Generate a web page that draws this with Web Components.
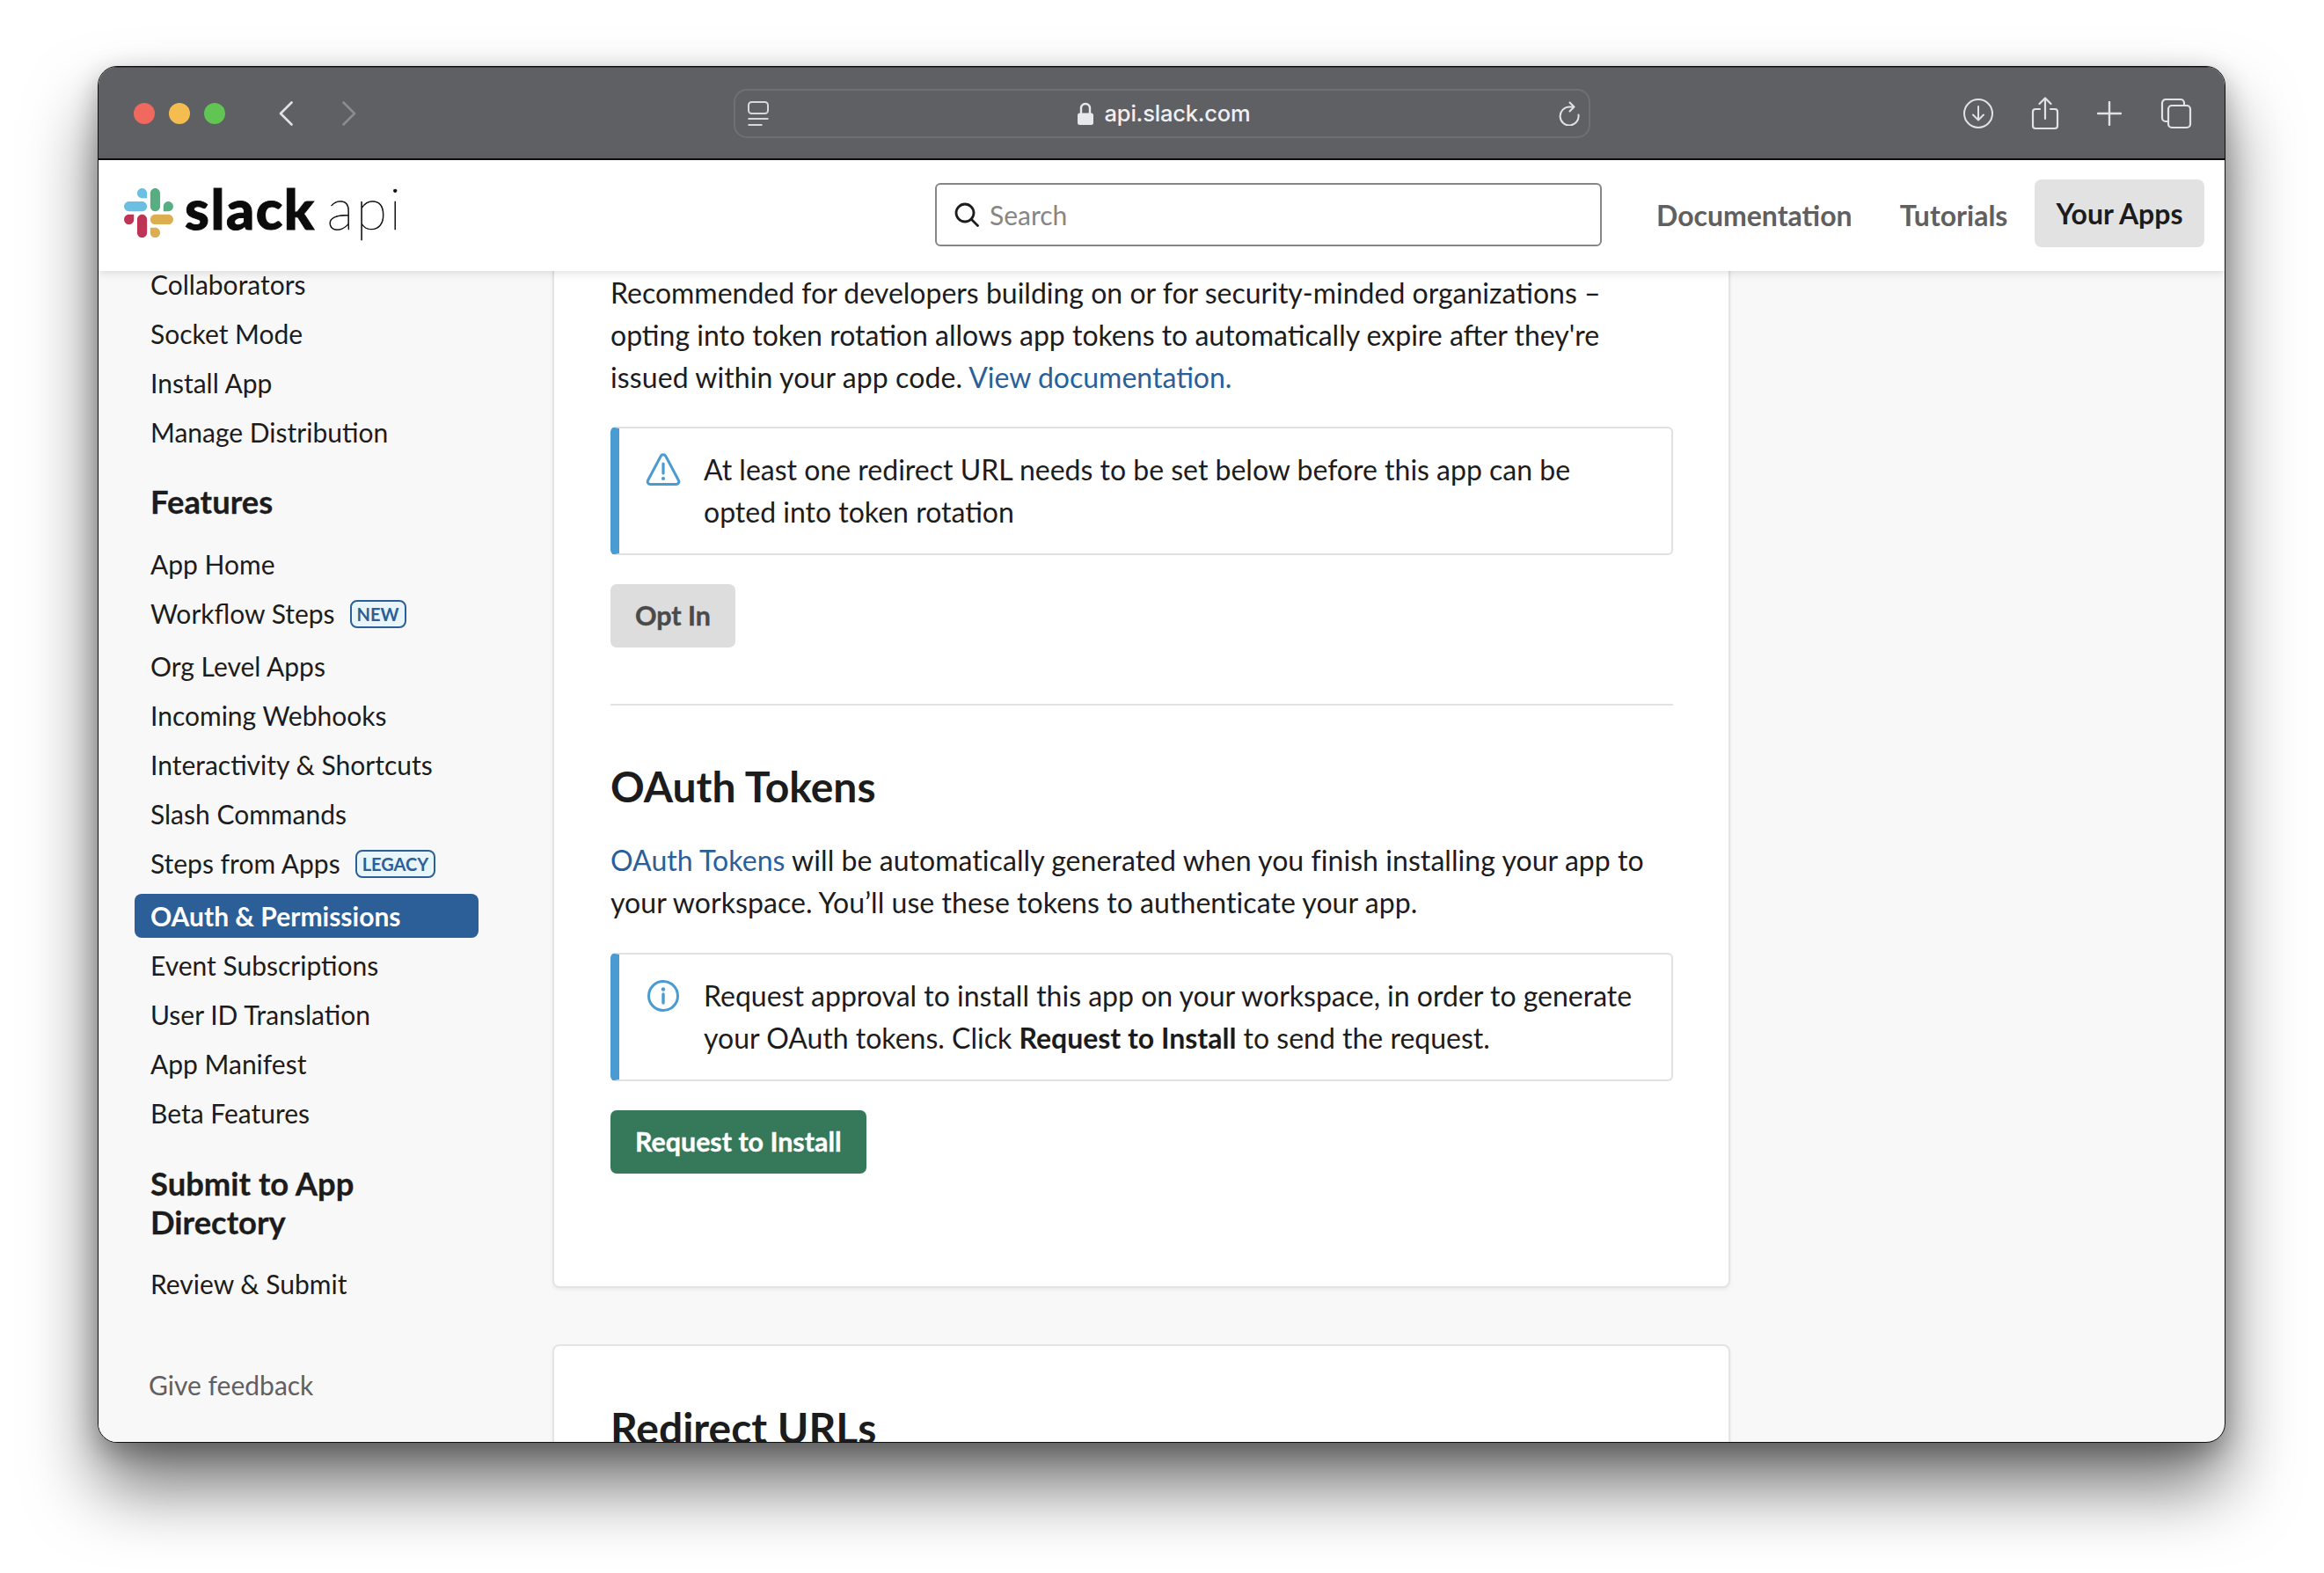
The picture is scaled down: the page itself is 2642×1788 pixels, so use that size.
<!DOCTYPE html>
<html lang="en"><head><meta charset="utf-8"><title>slack api</title>
<style>
html,body{margin:0;padding:0;background:#fff}
body{width:2642px;height:1788px;overflow:hidden;font-family:Lato,"Liberation Sans",sans-serif;color:#1d1c1d}
</style></head>
<body>
<x-window>
  <x-titlebar slot="top"></x-titlebar>
  <x-apiheader slot="top"></x-apiheader>
  <x-sidebar slot="side">
    <x-navitem>Collaborators</x-navitem>
    <x-navitem>Socket Mode</x-navitem>
    <x-navitem>Install App</x-navitem>
    <x-navitem>Manage Distribution</x-navitem>
    <x-navhead>Features</x-navhead>
    <x-navitem>App Home</x-navitem>
    <x-navitem badge>Workflow Steps<x-badge>NEW</x-badge></x-navitem>
    <x-navitem>Org Level Apps</x-navitem>
    <x-navitem>Incoming Webhooks</x-navitem>
    <x-navitem>Interactivity &amp; Shortcuts</x-navitem>
    <x-navitem>Slash Commands</x-navitem>
    <x-navitem badge>Steps from Apps<x-badge>LEGACY</x-badge></x-navitem>
    <x-navitem active>OAuth &amp; Permissions</x-navitem>
    <x-navitem>Event Subscriptions</x-navitem>
    <x-navitem>User ID Translation</x-navitem>
    <x-navitem>App Manifest</x-navitem>
    <x-navitem>Beta Features</x-navitem>
    <x-navhead style="margin:33px 0 23px 18px">Submit to App<br>Directory</x-navhead>
    <x-navitem>Review &amp; Submit</x-navitem>
    <x-feedback>Give feedback</x-feedback>
  </x-sidebar>
  <x-main slot="main">
    <x-card first>
      <x-para>Recommended for developers building on or for security-minded organizations – opting into token rotation allows app tokens to automatically expire after they're <span style="letter-spacing:.1px">issued within your app code.</span> <x-link>View documentation.</x-link></x-para>
      <x-alert kind="warn">At least one redirect URL needs to be set below before this app can be opted into token rotation</x-alert>
      <x-btn kind="off">Opt In</x-btn>
      <x-rule></x-rule>
      <x-title>OAuth Tokens</x-title>
      <x-para style="letter-spacing:.06px"><x-link>OAuth Tokens</x-link> will be automatically generated when you finish installing your app to your workspace. You’ll use these tokens to authenticate your app.</x-para>
      <x-alert kind="info" style="margin-top:33px">Request approval to install this app on your workspace, in order to generate your OAuth tokens. Click <b>Request to Install</b> to send the request.</x-alert>
      <x-btn kind="go">Request to Install</x-btn>
    </x-card>
    <x-card>
      <x-title>Redirect URLs</x-title>
    </x-card>
  </x-main>
</x-window>
<script>
function def(name, css, html, setup){
  customElements.define(name, class extends HTMLElement{
    constructor(){super();const r=this.attachShadow({mode:'open'});
      r.innerHTML='<style>'+css+'</style>'+html;}
    connectedCallback(){ if(setup) setup(this, this.shadowRoot); }
  });
}
def('x-window',`
:host{display:flex;flex-direction:column;box-sizing:border-box;width:2419px;height:1565px;margin:75px 0 0 111px;border-radius:22px;overflow:hidden;background:#f8f8f8;border:1px solid #111;
 box-shadow:0 50px 80px rgba(0,0,0,.55),0 10px 30px rgba(0,0,0,.28)}
.top{display:flex;flex-direction:column;flex:none;z-index:2}
.row{display:flex;flex:1;min-height:0;overflow:hidden}
`,`<div class="top"><slot name="top"></slot></div><div class="row"><slot name="side"></slot><slot name="main"></slot></div>`);

const ic='fill="none" stroke="#e2e2e4" stroke-linecap="round" stroke-linejoin="round"';
def('x-titlebar',`
:host{display:flex;align-items:center;height:106px;box-sizing:border-box;background:#5f6064;border-bottom:2px solid #0c0c0c;border-top:1px solid #3a3a3c;flex:none}
.lights{display:flex;gap:16px;margin-left:40px;flex:none}
.lights i{width:24px;height:24px;border-radius:50%;display:block}
.nav{display:flex;gap:56px;margin-left:61px;align-items:center;flex:none}
svg{display:block;flex:none}
.url{display:flex;align-items:center;box-sizing:border-box;flex:none;width:974px;height:56px;margin-left:429px;border:2px solid #6f7074;border-radius:15px;padding:0 10px 0 14px}
.host{flex:1;display:flex;justify-content:center;align-items:center;gap:13px;font:500 25.5px Inter,Roboto,"Liberation Sans",sans-serif;color:#f0f0f2;letter-spacing:-.2px}
.tools{display:flex;align-items:center;margin-left:423px;flex:none}
`,`
<div class="lights"><i style="background:#f0695e"></i><i style="background:#f5bd4f"></i><i style="background:#61c554"></i></div>
<div class="nav">
 <svg width="16" height="28" viewBox="0 0 16 28"><path d="M14.5 1.5 2 14l12.5 12.5" ${ic} stroke-width="2.6"/></svg>
 <svg width="16" height="28" viewBox="0 0 16 28"><path d="M1.5 1.5 14 14 1.5 26.5" fill="none" stroke="#8b8c90" stroke-linecap="round" stroke-linejoin="round" stroke-width="2.6"/></svg>
</div>
<div class="url">
 <svg width="24" height="28" viewBox="0 0 24 28"><rect x="1" y="1" width="22" height="13" rx="3.500" fill="none" stroke="#d8d8da" stroke-width="2"/><path d="M.5 20h23M.5 27h16" fill="none" stroke="#d8d8da" stroke-width="2"/></svg>
 <div class="host"><svg width="18" height="26" viewBox="0 0 18 26"><path d="M4 14V7a5 5 0 0 1 10 0v7" fill="none" stroke="#e8e8ea" stroke-width="2.4"/><rect x="0" y="12.500" width="18" height="13.500" rx="2.500" fill="#e8e8ea"/></svg><span>api.slack.com</span></div>
 <svg width="24" height="28" viewBox="0 0 24 28"><path d="M22.500 15.500A10.500 10.500 0 1 1 12 6.500h5" ${ic} stroke-width="2"/><path d="M12.500 1.500 17.500 6.500 12.500 11.500" ${ic} stroke-width="2"/></svg>
</div>
<div class="tools">
 <svg width="36" height="36" viewBox="0 0 36 36"><circle cx="18" cy="18" r="16" ${ic} stroke-width="2"/><path d="M18 10v15M12 19.500l6 6 6-6" ${ic} stroke-width="2"/></svg>
 <svg style="margin-left:42px" width="32" height="38" viewBox="0 0 32 38"><path d="M10 14H5a3 3 0 0 0-3 3v16a3 3 0 0 0 3 3h22a3 3 0 0 0 3-3V17a3 3 0 0 0-3-3h-5M16 25V2M9.500 8 16 1.500 22.500 8" ${ic} stroke-width="2.200"/></svg>
 <svg style="margin-left:43px" width="28" height="28" viewBox="0 0 28 28"><path d="M14 1v26M1 14h26" ${ic} stroke-width="2.400"/></svg>
 <svg style="margin-left:44px" width="36" height="36" viewBox="0 0 36 36"><path d="M8 27H6a4 4 0 0 1-4-4V6a4 4 0 0 1 4-4h17a4 4 0 0 1 4 4v2" ${ic} stroke-width="2.200"/><rect x="9" y="9" width="25" height="25" rx="4" ${ic} stroke-width="2.200"/></svg>
</div>`);

def('x-apiheader',`
:host{display:flex;align-items:center;height:126px;box-sizing:border-box;padding-bottom:2px;background:#fff;box-shadow:0 2px 10px rgba(0,0,0,.13);flex:none}
.logo{display:flex;align-items:center;width:951px;box-sizing:border-box;padding:0 0 4px 29px;flex:none}
.slack{font:900 63px/1 Lato,sans-serif;color:#0b0b0b;margin-left:13px;letter-spacing:1.500px;padding-bottom:12px;-webkit-text-stroke:1px #0b0b0b}
.api{font:100 65px/1 Lato,sans-serif;color:#111;margin-left:13px;letter-spacing:2.500px;padding-bottom:12px;-webkit-text-stroke:.7px #111}
.search{display:flex;align-items:center;box-sizing:border-box;width:758px;height:72px;border:2px solid #868686;border-radius:6px;padding-left:20px;gap:12px;font:400 30px Lato,sans-serif;color:#868686;flex:none}
.links{display:flex;align-items:center;margin-left:62px;font:700 32px Lato,sans-serif;color:#616061;flex:none}
.links span+span{margin-left:54px}
.links .on{margin-left:31px!important;margin-top:-4px;background:#e2e2e2;color:#1d1c1d;border-radius:8px;padding:0 24px;height:77px;display:flex;align-items:center}
`,`
<div class="logo">
<svg width="56" height="56" viewBox="0 0 2447.600 2452.500"><path d="m897.400 0c-135.300.1-244.800 109.900-244.700 245.200-.1 135.300 109.500 245.100 244.800 245.200h244.800v-245.100c.1-135.300-109.500-245.100-244.900-245.300.1 0 .1 0 0 0m0 654h-652.600c-135.300.1-244.900 109.900-244.800 245.200-.2 135.300 109.400 245.100 244.700 245.300h652.700c135.300-.1 244.900-109.900 244.800-245.200.1-135.400-109.500-245.200-244.800-245.300z" fill="#6bbfe2"/><path d="m2447.600 899.200c.1-135.300-109.500-245.100-244.800-245.200-135.300.1-244.900 109.900-244.800 245.200v245.300h244.800c135.300-.1 244.900-109.900 244.800-245.300zm-652.700 0v-654c.1-135.200-109.400-245-244.700-245.200-135.300.1-244.900 109.900-244.800 245.200v654c-.2 135.300 109.400 245.100 244.700 245.300 135.300-.1 244.900-109.900 244.800-245.300z" fill="#58ae80"/><path d="m1550.100 2452.500c135.300-.1 244.900-109.900 244.800-245.200.1-135.300-109.500-245.100-244.800-245.200h-244.800v245.200c-.1 135.200 109.500 245 244.800 245.200zm0-654.100h652.700c135.300-.1 244.900-109.900 244.800-245.200.2-135.300-109.400-245.100-244.700-245.300h-652.700c-135.300.1-244.900 109.900-244.800 245.200-.1 135.400 109.400 245.200 244.700 245.300z" fill="#dcae50"/><path d="m0 1553.200c-.1 135.300 109.500 245.100 244.800 245.200 135.300-.1 244.900-109.900 244.800-245.200v-245.200h-244.800c-135.300.1-244.900 109.900-244.800 245.200zm652.700 0v654c-.2 135.300 109.400 245.100 244.700 245.300 135.300-.1 244.900-109.900 244.800-245.200v-653.900c.2-135.300-109.400-245.100-244.700-245.300-135.400 0-244.900 109.800-244.800 245.100 0 0 0 0 0 0z" fill="#bd3455"/></svg>
<span class="slack">slack</span><span class="api">api</span></div>
<div class="search"><svg width="28" height="28" viewBox="0 0 28 28"><circle cx="12" cy="12" r="10" fill="none" stroke="#1d1c1d" stroke-width="2.800"/><path d="m19.500 19.500 7 7" stroke="#1d1c1d" stroke-width="2.800" stroke-linecap="round"/></svg><span>Search</span></div>
<div class="links"><span>Documentation</span><span>Tutorials</span><span class="on">Your Apps</span></div>`);

def('x-sidebar',`:host{display:block;box-sizing:border-box;width:516px;flex:none;margin-top:-10px;padding:0 0 0 41px;background:#f8f8f8}`,`<slot></slot>`);
def('x-navitem',`
:host{display:flex;align-items:center;box-sizing:border-box;width:391px;height:50px;margin-bottom:6px;padding-left:18px;border-radius:8px;font:400 30px/50px Lato,sans-serif;color:#1d1c1d;white-space:nowrap}
:host([active]){background:#2c5f97;color:#fff;font-weight:700}
:host([badge]){height:54px;align-items:flex-start}
`,`<slot></slot>`);
def('x-badge',`
:host{display:inline-flex;align-items:center;box-sizing:border-box;height:32px;margin:10px 0 0 17px;padding:0 6px;border:2px solid #2c5f97;border-radius:8px;background:#e8f5fa;color:#2c5f97;font:700 20px/1 Lato,sans-serif}
`,`<slot></slot>`);
def('x-navhead',`:host{display:block;margin:32px 0 24px 18px;font:700 36.400px/44px Lato,sans-serif;-webkit-text-stroke:.3px #1d1c1d;color:#1d1c1d}`,`<slot></slot>`);
def('x-feedback',`:host{display:block;margin:65px 0 0 16px;font:400 30px/50px Lato,sans-serif;color:#616061}`,`<slot></slot>`);
def('x-main',`:host{display:block;width:1339px;flex:none}`,`<slot></slot>`);
def('x-card',`
:host{display:block;box-sizing:border-box;width:1339px;margin-bottom:64px;padding:63px 63px 0 64px;background:#fff;border:2px solid #e4e4e4;border-radius:8px;box-shadow:0 2px 4px rgba(0,0,0,.06)}
:host([first]){margin-top:-20px;padding-top:19px;padding-bottom:128px}
`,`<slot></slot>`);
def('x-para',`:host{display:block;font:400 32px/48px Lato,sans-serif;color:#1d1c1d}`,`<slot></slot>`);
def('x-link',`:host{color:#2a6099}`,`<slot></slot>`);
def('x-title',`:host{display:block;margin:0 0 30px;font:700 48px/60px Lato,sans-serif;color:#1d1c1d}`,`<slot></slot>`);
def('x-rule',`:host{display:block;height:2px;background:#e2e2e2;margin:64px 0 62px}`,``);
const warn='<svg width="40" height="38" viewBox="0 0 40 38"><path d="M17.200 3.500 2.600 31a3 3 0 0 0 2.700 4.500h29.400a3 3 0 0 0 2.700-4.500L22.800 3.500a3.200 3.200 0 0 0-5.600 0z" fill="none" stroke="#4a9bd2" stroke-width="3" stroke-linejoin="round"/><path d="M20 12v11" stroke="#4a9bd2" stroke-width="3.200" stroke-linecap="round"/><circle cx="20" cy="29" r="2.100" fill="#4a9bd2"/></svg>';
const info='<svg width="38" height="38" viewBox="0 0 38 38"><circle cx="19" cy="19" r="16.500" fill="none" stroke="#4a9bd2" stroke-width="3"/><path d="M19 17v10" stroke="#4a9bd2" stroke-width="3.400" stroke-linecap="round"/><circle cx="19" cy="11.500" r="2.200" fill="#4a9bd2"/></svg>';
def('x-alert',`
:host{display:flex;box-sizing:border-box;width:100%;margin-top:32px;border:2px solid #e0e0e0;border-left:10px solid #4a9bd2;border-radius:6px;padding:23px 36px 23px 30px;font:400 32px/48px Lato,sans-serif;color:#1d1c1d}
.i{flex:none;width:40px;margin-right:26px;padding-top:5px;display:flex;justify-content:center;align-items:flex-start}
svg{display:block}
`,`<div class="i"></div><div><slot></slot></div>`,(el,r)=>{r.querySelector('.i').innerHTML=el.getAttribute('kind')==='warn'?warn:info;});
def('x-btn',`
:host{display:inline-flex;align-items:center;height:72px;box-sizing:border-box;margin-top:33px;padding:0 28px 1px;border-radius:7px;font:700 30.4px/1 Lato,sans-serif;-webkit-text-stroke:.4px currentColor}
:host([kind=off]){background:#ddd;color:#4a4a4a}
:host([kind=go]){background:#36795a;color:#fff}
`,`<slot></slot>`);
</script>
</body></html>
